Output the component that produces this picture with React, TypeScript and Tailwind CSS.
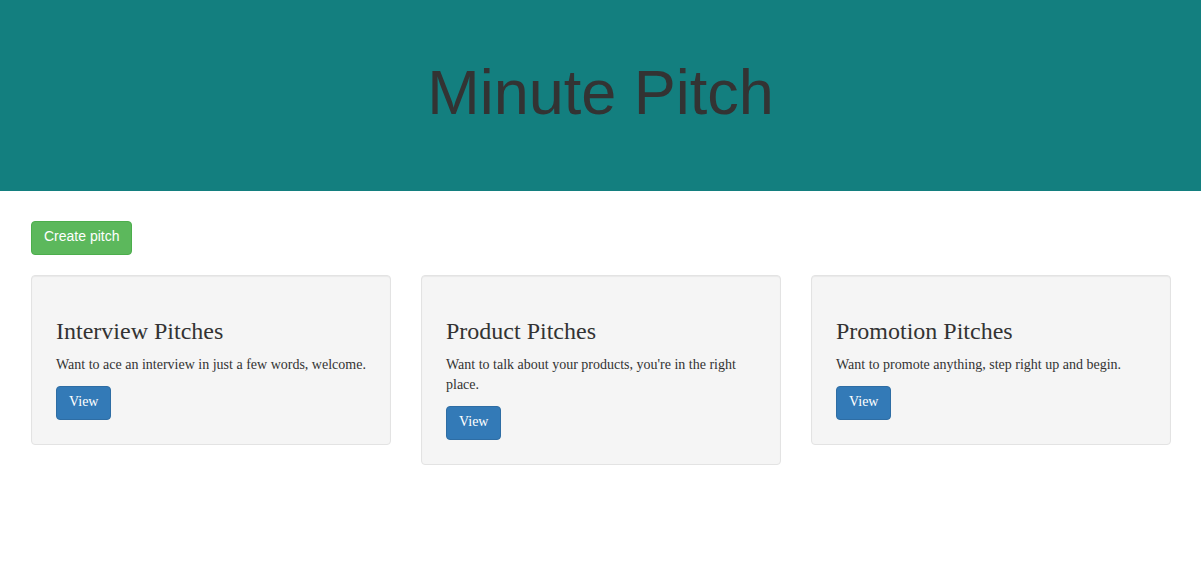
import React from "react";

const cards = [
  {
    title: "Interview Pitches",
    text: "Want to ace an interview in just a few words, welcome.",
  },
  {
    title: "Product Pitches",
    text: "Want to talk about your products, you're in the right place.",
  },
  {
    title: "Promotion Pitches",
    text: "Want to promote anything, step right up and begin.",
  },
];

export default function App() {
  return (
    <div className="min-h-[565px] bg-white text-[#333333] font-['Liberation_Serif',serif]">
      <header className="h-[191px] bg-[#137f7f] pt-[58px]">
        <h1 className="text-center font-['Liberation_Sans',Arial,sans-serif] text-[63px] leading-[1.1] font-normal text-[#333333]">
          Minute Pitch
        </h1>
      </header>
      <main className="pl-[31px] pr-[30px] pt-[30px]">
        <button className="h-[34px] rounded-[4px] border border-[#4cae4c] bg-[#5cb85c] px-[12px] pt-[4px] pb-[8px] font-['Liberation_Sans',Arial,sans-serif] text-[14px] leading-[20px] text-white">
          Create pitch
        </button>
        <div className="mt-[20px] flex items-start gap-[30px]">
          {cards.map((c) => (
            <div
              key={c.title}
              className="w-[360px] shrink-0 rounded-[4px] border border-[#e3e3e3] bg-[#f5f5f5] pl-[24px] pr-[19px] pt-[42px] pb-[24px] shadow-[inset_0_1px_1px_rgba(0,0,0,0.05)]"
            >
              <h3 className="text-[24px] leading-[26.4px] font-medium">{c.title}</h3>
              <p className="mt-[10.5px] text-[14px] leading-[20px]">{c.text}</p>
              <button className="mt-[11.5px] h-[34px] rounded-[4px] border border-[#2e6da4] bg-[#337ab7] px-[12px] pt-[5px] pb-[7px] text-[14px] leading-[20px] text-white">
                View
              </button>
            </div>
          ))}
        </div>
      </main>
    </div>
  );
}
